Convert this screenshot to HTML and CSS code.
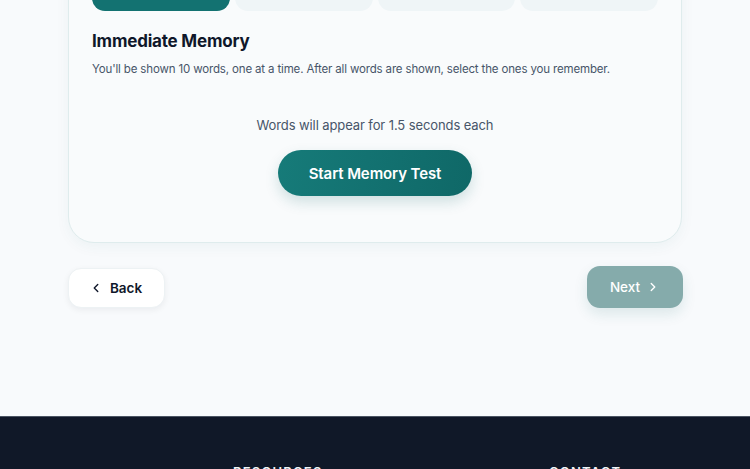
FILE: index.html
```html
<!DOCTYPE html>
<html lang="en">
<head>
<meta charset="utf-8">
<title>Immediate Memory</title>
<link rel="stylesheet" href="styles.css">
</head>
<body>
<main class="main">
  <section class="card">
    <div class="tabs">
      <div class="tab tab-active"></div>
      <div class="tab"></div>
      <div class="tab"></div>
      <div class="tab"></div>
    </div>
    <h2 class="title">Immediate Memory</h2>
    <p class="desc">You'll be shown 10 words, one at a time. After all words are shown, select the ones you remember.</p>
    <div class="center">
      <p class="hint">Words will appear for 1.5 seconds each</p>
      <button class="start">Start Memory Test</button>
    </div>
  </section>
  <div class="nav">
    <button class="back">
      <svg width="14" height="14" viewBox="0 0 24 24" fill="none" stroke="currentColor" stroke-width="2.4" stroke-linecap="round" stroke-linejoin="round"><path d="M15 18l-6-6 6-6"/></svg>
      <span>Back</span>
    </button>
    <button class="next">
      <span>Next</span>
      <svg width="14" height="14" viewBox="0 0 24 24" fill="none" stroke="currentColor" stroke-width="2.4" stroke-linecap="round" stroke-linejoin="round"><path d="M9 18l6-6-6-6"/></svg>
    </button>
  </div>
</main>
<footer class="footer">
  <div class="footer-inner">
    <div class="brand">
      <svg class="logo" width="14" height="20" viewBox="0 0 14 20"><circle cx="7" cy="10" r="6" fill="#f1f5f9"/></svg>
      <span>NeuroCheck</span>
    </div>
    <div class="col">RESOURCES</div>
    <div class="col col-contact">CONTACT</div>
  </div>
</footer>
</body>
</html>
```

FILE: styles.css
```css
* { box-sizing: border-box; }
html, body { margin: 0; padding: 0; }
body {
  background: #f8fafc;
  font-family: Inter, "Noto Sans", sans-serif;
  color: #0f172a;
  overflow: hidden;
}
.main {
  width: 614px;
  margin: -53px auto 0;
  padding-bottom: 108px;
}
.card {
  background: #f9fbfc;
  border: 1px solid #dfeced;
  border-radius: 26px;
  padding: 23px 23px 46px;
  box-shadow: 0 4px 14px rgba(15, 100, 100, 0.05);
}
.tabs {
  display: flex;
  gap: 5px;
  margin-bottom: 16px;
}
.tab {
  flex: 1;
  height: 40px;
  border-radius: 13px;
  background: #eff5f7;
}
.tab-active {
  background: #137271;
}
.title {
  margin: 0;
  font-size: 17px;
  line-height: 28px;
  font-weight: 700;
  color: #0f172a;
  letter-spacing: -0.2px;
}
.desc {
  margin: 5px 0 0;
  font-size: 11.5px;
  line-height: 18px;
  letter-spacing: -0.15px;
  color: #475569;
}
.center {
  display: flex;
  flex-direction: column;
  align-items: center;
  margin-top: 37px;
}
.hint {
  margin: 0;
  font-size: 13px;
  line-height: 20px;
  letter-spacing: -0.1px;
  color: #475569;
}
.start {
  margin-top: 15px;
  width: 194px;
  height: 46px;
  border: none;
  border-radius: 23px;
  background: linear-gradient(100deg, #167b79 0%, #137271 45%, #0f6867 100%);
  color: #ffffff;
  font-family: Inter, "Noto Sans", sans-serif;
  font-size: 15px;
  letter-spacing: -0.1px;
  font-weight: 600;
  box-shadow: 0 6px 14px rgba(15, 100, 100, 0.18);
}
.nav {
  display: flex;
  justify-content: space-between;
  align-items: flex-end;
  margin-top: 23px;
}
.back {
  display: flex;
  align-items: center;
  justify-content: center;
  gap: 7px;
  width: 97px;
  height: 40px;
  border: 1px solid #edf2f4;
  border-radius: 13px;
  background: #ffffff;
  color: #0f172a;
  font-family: Inter, "Noto Sans", sans-serif;
  font-size: 13.5px;
  font-weight: 600;
  box-shadow: 0 2px 6px rgba(15, 23, 42, 0.06);
  padding: 0 2px 0 0;
}
.next {
  display: flex;
  align-items: center;
  justify-content: center;
  gap: 6px;
  width: 96px;
  height: 42px;
  margin-right: -1px;
  border: none;
  border-radius: 13px;
  background: #85abab;
  color: #ffffff;
  font-family: Inter, "Noto Sans", sans-serif;
  font-size: 13.5px;
  font-weight: 500;
  box-shadow: 0 6px 14px rgba(15, 100, 100, 0.12);
  padding: 0;
}
.footer {
  background: #101828;
  border-top: 1px solid #4b5563;
  height: 200px;
}
.footer-inner {
  display: flex;
  padding: 47px 0 0 72px;
  font-size: 13px;
  letter-spacing: 1.2px;
  font-weight: 600;
  color: #f1f5f9;
}
.brand {
  width: 161px;
  display: flex;
  align-items: flex-start;
  gap: 8px;
  font-size: 17px;
  letter-spacing: 0;
  margin-top: 2px;
}
.logo { margin-top: 1px; flex: none; }
.col { width: 316px; }
.col-contact { width: auto; }
```
